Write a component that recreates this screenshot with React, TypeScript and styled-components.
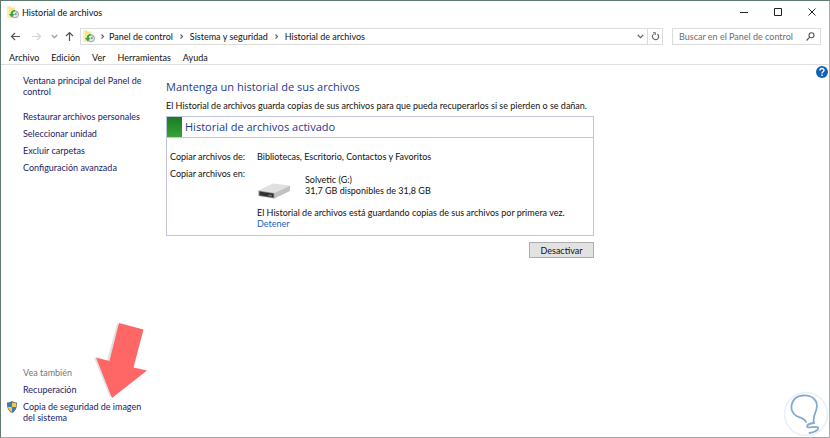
import React from "react";
import styled, { createGlobalStyle } from "styled-components";

const GlobalStyle = createGlobalStyle`
  * { box-sizing: border-box; }
  body { margin: 0; background: #fff; }
  body, button, input { font-family: Lato, "Open Sans", sans-serif; font-size: 9px; line-height: 11px; color: #111; }
`;

const Window = styled.div`
  position: relative;
  display: flex;
  flex-direction: column;
  min-height: 100vh;
  background: #fff;
  border: 1px solid #5f7a70;
  border-right-color: #a9b0ad;
  border-bottom-color: #a9a9a9;
`;

const TitleBar = styled.header`
  display: flex;
  align-items: center;
  height: 22px;
  padding-left: 6px;
`;

const Title = styled.h1`
  flex: 1;
  margin: 0 0 0 3px;
  font-size: 9px;
  font-weight: 400;
`;

const CaptionButton = styled.button`
  display: flex;
  align-items: center;
  justify-content: center;
  width: 34px;
  height: 22px;
  padding: 0;
  border: 0;
  background: none;
`;

const NavRow = styled.nav`
  display: flex;
  align-items: center;
  padding: 5px 8px 0 7px;
`;

const NavButton = styled.button<{ $width: number }>`
  display: flex;
  align-items: center;
  justify-content: center;
  flex: none;
  width: ${(p) => p.$width}px;
  height: 14px;
  padding: 0;
  border: 0;
  background: none;
`;

const AddressBar = styled.div`
  display: flex;
  align-items: center;
  flex: 1;
  height: 17px;
  margin-left: 1px;
  padding-left: 2px;
  border: 1px solid #dcdcdc;
`;

const Crumb = styled.a`
  color: #111;
  text-decoration: none;
  white-space: nowrap;
`;

const CrumbGap = styled.span<{ $first: boolean }>`
  display: flex;
  justify-content: center;
  width: ${(p) => (p.$first ? 14 : 17)}px;
`;

const Spacer = styled.div`
  flex: 1;
`;

const RefreshCell = styled.div`
  display: flex;
  align-items: center;
  height: 15px;
  border-left: 1px solid #dcdcdc;
`;

const SearchBox = styled.label`
  display: flex;
  align-items: center;
  width: 149px;
  height: 17px;
  margin-left: 9px;
  padding: 0 5px 0 6px;
  border: 1px solid #dcdcdc;
`;

const SearchInput = styled.input`
  flex: 1;
  min-width: 0;
  padding: 0;
  border: 0;
  outline: 0;
  background: none;
  &::placeholder { color: #6d6d6d; opacity: 1; }
`;

const MenuBar = styled.div`
  display: flex;
  gap: 12px;
  padding: 7px 8px 1px;
  border-bottom: 1px solid #e0e0e0;
`;

const MenuItem = styled.button`
  height: 11px;
  padding: 0;
  border: 0;
  background: none;
`;

const Body = styled.div`
  display: flex;
  flex: 1;
`;

const Sidebar = styled.aside`
  display: flex;
  flex-direction: column;
  gap: 6px;
  flex: none;
  width: 165px;
  padding: 10px 14px 14px 5px;
`;

const SideLink = styled.a<{ $first?: boolean }>`
  display: grid;
  grid-template-columns: 12px 1fr;
  column-gap: 5px;
  margin-bottom: ${(p) => (p.$first ? 8 : 0)}px;
  color: #1b1b66;
  text-decoration: none;
`;

const SideLabel = styled.span`
  grid-column: 2;
`;

const SeeAlso = styled.div`
  margin: auto 0 0 17px;
  color: #777;
`;

const Main = styled.main`
  flex: 1;
  min-width: 0;
  padding-top: 14px;
`;

const Content = styled.div`
  max-width: 428px;
`;

const Heading = styled.h2`
  margin: 0;
  color: #1a3a94;
  font-family: "Open Sans", sans-serif;
  font-size: 11px;
  font-weight: 400;
  line-height: 16px;
`;

const Intro = styled.p`
  margin: 5px 0;
  white-space: nowrap;
`;

const Panel = styled.section`
  border: 1px solid #c3c3de;
`;

const PanelHeader = styled.div`
  display: flex;
  align-items: center;
  height: 21px;
  border-bottom: 1px solid #c3c3de;
`;

const StatusBlock = styled.div`
  width: 15px;
  height: 20px;
  margin-right: 3px;
  background: linear-gradient(#1b7a22, #35a338);
`;

const Details = styled.dl`
  display: grid;
  grid-template-columns: 87px 1fr;
  row-gap: 6px;
  margin: 0;
  padding: 13px 4px 6px 3px;
`;

const Term = styled.dt`
  margin: 0;
`;

const Value = styled.dd`
  margin: 0;
`;

const Drive = styled.div`
  display: flex;
  align-items: flex-start;
  margin: 6px 0 8px;
`;

const DrivePicture = styled.svg`
  flex: none;
  margin-top: 8px;
`;

const DriveText = styled.div`
  margin-left: 14px;
`;

const ActionLink = styled.a`
  color: #1a62c4;
  text-decoration: none;
`;

const Actions = styled.div`
  display: flex;
  justify-content: flex-end;
  margin-top: 6px;
`;

const PushButton = styled.button`
  width: 65px;
  height: 16px;
  padding: 0;
  border: 1px solid #adadad;
  background: #e2e2e2;
`;

const HelpButton = styled.button`
  align-self: flex-start;
  width: 14px;
  height: 14px;
  padding: 0;
  border: 0;
  background: none;
`;

const Pointer = styled.svg`
  position: absolute;
  left: 88px;
  bottom: 36px;
  pointer-events: none;
`;

const Watermark = styled.svg`
  position: absolute;
  right: 0;
  bottom: 0;
  pointer-events: none;
`;

const HistoryIcon = () => (
  <svg width="12" height="13" viewBox="0 0 12 13" aria-hidden="true">
    <path d="M0 .5h4l1 1h3v10H0z" fill="#f9e391" />
    <path d="M0 .5h2v11H0z" fill="#fbeebb" />
    <circle cx="8" cy="8.300" r="3.500" fill="#e3e6ea" stroke="#9a9da3" />
    <path d="M8 8.300l1.800-1.800M8 8.300h1.600" stroke="#666" strokeWidth=".8" />
    <path d="M8 4C5 4 3.700 6 3.700 8H1.900l2.900 3.500L7.500 8H5.800c0-1.500.7-2.500 2.200-2.700z" fill="#35a936" />
  </svg>
);

const Chevron = ({ down = false, color = "#666" }: { down?: boolean; color?: string }) => (
  <svg width="7" height="7" viewBox="0 0 7 7" fill="none" stroke={color} strokeWidth="1.200" aria-hidden="true">
    <path d={down ? "M.8 2l2.700 2.700L6.200 2" : "M2.500 1.500l2 2-2 2"} />
  </svg>
);

const Arrow = ({ d, color }: { d: string; color: string }) => (
  <svg width="11" height="11" viewBox="0 0 11 11" fill="none" stroke={color} strokeWidth="1.200" aria-hidden="true">
    <path d={d} />
  </svg>
);

const DriveIcon = () => (
  <DrivePicture width="34" height="17" viewBox="0 0 34 17" aria-hidden="true">
    <path d="M1.500 8.500L16 1.500 33 3.500 17.500 11z" fill="#e0e0e0" />
    <path d="M17.500 11L33 3.500V9L17.500 16.500z" fill="#c2c2c2" />
    <path d="M1.500 8.500l16 2.500v5.500l-16-2.500z" fill="#8c8c8c" />
    <path d="M2.500 9.500l14 2.200v3.800l-14-2.200z" fill="#303030" />
    <path d="M11.500 12.500l3.500.6v1.500l-3.500-.6z" fill="#777" />
  </DrivePicture>
);

const ShieldIcon = () => (
  <svg width="12" height="12" viewBox="0 0 12 12" aria-hidden="true">
    <path d="M6 0c1.500 1 3.300 1.500 5 1.500C11 6.500 10 10 6 12 2 10 1 6.500 1 1.500 2.700 1.500 4.500 1 6 0z" fill="#57636b" />
    <path d="M6 1.200V6H1.900C1.700 5 1.700 3.500 1.700 2.300 3.300 2.200 4.800 1.800 6 1.200z" fill="#2f7fc4" />
    <path d="M6 1.200V6h4.100c.2-1 .2-2.500.2-3.700C8.700 2.200 7.200 1.800 6 1.200z" fill="#f6cb45" />
    <path d="M6 11.200V6H1.900C2.400 8.500 3.600 10 6 11.200z" fill="#f6cb45" />
    <path d="M6 11.200V6h4.100C9.600 8.500 8.400 10 6 11.200z" fill="#2f7fc4" />
  </svg>
);

const menus = ["Archivo", "Edición", "Ver", "Herramientas", "Ayuda"];
const crumbs = ["Panel de control", "Sistema y seguridad", "Historial de archivos"];
const tasks = [
  "Ventana principal del Panel de control",
  "Restaurar archivos personales",
  "Seleccionar unidad",
  "Excluir carpetas",
  "Configuración avanzada",
];

export default function App() {
  return (
    <>
      <GlobalStyle />
      <Window>
        <TitleBar>
          <HistoryIcon />
          <Title>Historial de archivos</Title>
          <CaptionButton aria-label="Minimizar">
            <svg width="8" height="8" stroke="#222"><path d="M0 4.500h8" /></svg>
          </CaptionButton>
          <CaptionButton aria-label="Maximizar">
            <svg width="8" height="8" fill="none" stroke="#222"><path d="M.5.5h7v7h-7z" /></svg>
          </CaptionButton>
          <CaptionButton aria-label="Cerrar">
            <svg width="8" height="8" stroke="#222"><path d="M.5.5l7 7M7.500.5l-7 7" /></svg>
          </CaptionButton>
        </TitleBar>

        <NavRow aria-label="Navegación">
          <NavButton $width={15} aria-label="Atrás"><Arrow color="#555" d="M10 5.500H1.500M5 2L1.500 5.500 5 9" /></NavButton>
          <NavButton $width={27} aria-label="Adelante"><Arrow color="#d5d5d5" d="M1 5.500h8.500M6 2l3.500 3.500L6 9" /></NavButton>
          <NavButton $width={9} aria-label="Ubicaciones recientes"><Chevron down color="#999" /></NavButton>
          <NavButton $width={20} aria-label="Subir"><Arrow color="#555" d="M5.500 10V1.500M2 5l3.500-3.500L9 5" /></NavButton>
          <AddressBar>
            <HistoryIcon />
            {crumbs.map((c, i) => (
              <React.Fragment key={c}>
                <CrumbGap $first={i === 0}><Chevron /></CrumbGap>
                <Crumb href="#">{c}</Crumb>
              </React.Fragment>
            ))}
            <Spacer />
            <NavButton $width={14} aria-label="Historial de direcciones"><Chevron down /></NavButton>
            <RefreshCell>
              <NavButton $width={14} aria-label="Actualizar">
                <svg width="9" height="9" viewBox="0 0 9 9" fill="none" stroke="#666" strokeWidth="1.100">
                  <path d="M6.300 2A3.100 3.100 0 1 1 2.600 2.100M2 .8h2.200v2.200" />
                </svg>
              </NavButton>
            </RefreshCell>
          </AddressBar>
          <SearchBox>
            <SearchInput type="text" aria-label="Buscar" placeholder="Buscar en el Panel de control" />
            <svg width="9" height="9" viewBox="0 0 9 9" fill="none" stroke="#555" strokeWidth="1.100" aria-hidden="true">
              <circle cx="5.500" cy="3.300" r="2.500" /><path d="M3.700 5.100L.5 8.500" />
            </svg>
          </SearchBox>
        </NavRow>

        <MenuBar>
          {menus.map((m) => <MenuItem key={m}>{m}</MenuItem>)}
        </MenuBar>

        <Body>
          <Sidebar>
            {tasks.map((t, i) => (
              <SideLink key={t} href="#" $first={i === 0}><SideLabel>{t}</SideLabel></SideLink>
            ))}
            <SeeAlso>Vea también</SeeAlso>
            <SideLink href="#"><SideLabel>Recuperación</SideLabel></SideLink>
            <SideLink href="#">
              <ShieldIcon />
              <SideLabel>Copia de seguridad de imagen del sistema</SideLabel>
            </SideLink>
          </Sidebar>

          <Main>
            <Content>
              <Heading>Mantenga un historial de sus archivos</Heading>
              <Intro>El Historial de archivos guarda copias de sus archivos para que pueda recuperarlos si se pierden o se dañan.</Intro>
              <Panel>
                <PanelHeader>
                  <StatusBlock />
                  <Heading>Historial de archivos activado</Heading>
                </PanelHeader>
                <Details>
                  <Term>Copiar archivos de:</Term>
                  <Value>Bibliotecas, Escritorio, Contactos y Favoritos</Value>
                  <Term>Copiar archivos en:</Term>
                  <Value>
                    <Drive>
                      <DriveIcon />
                      <DriveText>
                        <div>Solvetic (G:)</div>
                        <div>31,7 GB disponibles de 31,8 GB</div>
                      </DriveText>
                    </Drive>
                    <div>El Historial de archivos está guardando copias de sus archivos por primera vez.</div>
                    <ActionLink href="#">Detener</ActionLink>
                  </Value>
                </Details>
              </Panel>
              <Actions><PushButton>Desactivar</PushButton></Actions>
            </Content>
          </Main>
          <HelpButton aria-label="Ayuda">
            <svg width="14" height="14" viewBox="0 0 14 14">
              <circle cx="7" cy="7" r="6" fill="#0f62b5" />
              <path d="M5 5.500c0-2.600 4-2.600 4-.2 0 1.500-2 1.500-2 3.200M7 9.600v1.400" fill="none" stroke="#fff" strokeWidth="1.400" />
            </svg>
          </HelpButton>
        </Body>

        <Pointer width="62" height="84" viewBox="0 0 62 84" aria-hidden="true">
          <path d="M28 7L52 13 43 50.500 55 54 21 80 5 40.500 18 44z" fill="#c9c9c9" opacity=".6" />
          <path d="M30 6L54.500 12.500 44.500 50.500 58 53.500 23 81 7 40.500 20.500 44z" fill="#ff6666" />
        </Pointer>

        <Watermark width="48" height="48" viewBox="0 0 48 48" fill="none" aria-hidden="true">
          <circle cx="25" cy="25" r="21.500" stroke="#e9eff6" strokeWidth="1.500" />
          <path d="M25 33C23.500 28 17 29.500 13 25 8 19 10.500 7 22 6.500c10-.5 15.500 5.500 13.500 13.500-1.200 5-4 8-2.500 14-3 .3-7 1.500-7 3.500 0 2.500 9.500-1 11 1 1.500 2.500-4.500 5-8.500 5.500" stroke="#86a9d0" strokeWidth="1.800" strokeLinecap="round" />
        </Watermark>
      </Window>
    </>
  );
}
